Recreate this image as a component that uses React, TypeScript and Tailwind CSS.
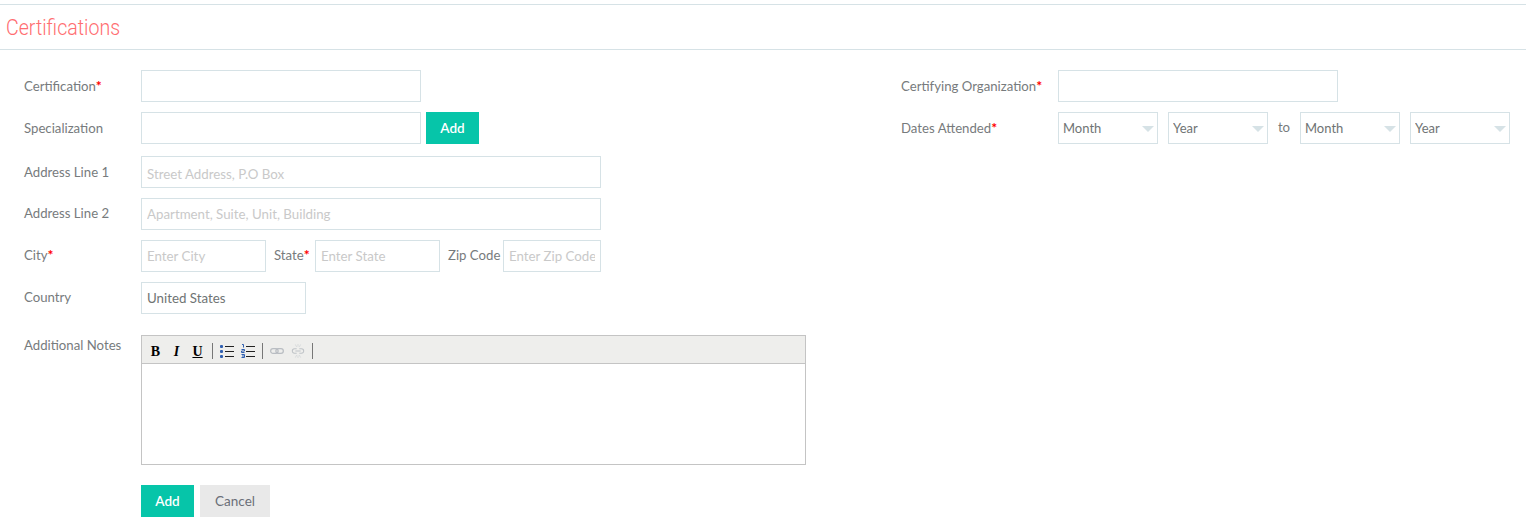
import type { ReactNode } from 'react'

const inputCls =
  "h-8 border border-[#d6e2e6] bg-white px-[5px] text-[13.3px] text-[#6f7474] placeholder:text-[#c9c9c9] outline-none"

function Req() {
  return <span className="text-[#f00] font-bold text-[14px]">*</span>
}

function Row({ label, req, className, labelClass, children }: { label: string; req?: boolean; className?: string; labelClass?: string; children: ReactNode }) {
  return (
    <div className={`flex items-start ${className || ''}`}>
      <label className={`w-[117px] shrink-0 text-[#777b7d] ${labelClass || 'h-8 leading-8'}`}>
        {label}
        {req && <Req />}
      </label>
      {children}
    </div>
  )
}

function MonthSelect({ text }: { text: string }) {
  return (
    <div className="relative w-[100px]">
      <select className="h-8 w-full appearance-none border border-[#d6e2e6] bg-white pl-[4px] text-[13px] leading-[28px] text-[#6f7474] outline-none" defaultValue={text}>
        <option>{text}</option>
      </select>
      <span className="absolute right-[4px] top-[14px] w-0 h-0 border-x-[6px] border-x-transparent border-t-[6px] border-t-[#d6e2e6]" />
    </div>
  )
}

function BulletIcon() {
  return (
    <svg width="14" height="14" viewBox="0 0 14 14">
      <rect x="0" y="1" width="3" height="3" rx="1" fill="#2f5fb0" />
      <rect x="0" y="6" width="3" height="3" rx="1" fill="#2f5fb0" />
      <rect x="0" y="11" width="3" height="3" rx="1" fill="#2f5fb0" />
      <path d="M5 2.5h9M5 7.5h9M5 12.5h9" stroke="#222" strokeWidth="1" />
    </svg>
  )
}

function NumberIcon() {
  return (
    <svg width="14" height="14" viewBox="0 0 14 14">
      <path d="M1 0.5h1.500v3M0.500 5.500h3v1.500h-3v1.500h3M0.500 10.500h3v3h-3M1 12h2.500" stroke="#2f5fb0" strokeWidth="1" fill="none" />
      <path d="M5 2.500h9M5 7.500h9M5 12.500h9" stroke="#222" strokeWidth="1" />
    </svg>
  )
}

function LinkIcon() {
  return (
    <svg width="14" height="14" viewBox="0 0 15 14">
      <rect x="0.700" y="4.500" width="8" height="5" rx="2.500" fill="none" stroke="#b9bdc2" strokeWidth="1.300" />
      <rect x="6.300" y="4.500" width="8" height="5" rx="2.500" fill="none" stroke="#b9bdc2" strokeWidth="1.300" />
    </svg>
  )
}

function UnlinkIcon() {
  return (
    <svg width="14" height="16" viewBox="0 0 16 16">
      <path d="M6.500 5.500H4a2.500 2.500 0 0 0 0 5h2.500M9.500 5.500H12a2.500 2.500 0 0 1 0 5H9.500M5 8h6" fill="none" stroke="#bfc3c7" strokeWidth="1.200" />
      <path d="M5 0.500l1.500 3M8 0v3M11 0.500l-1.500 3M5 15.500l1.500-3M8 16v-3M11 15.500l-1.500-3" stroke="#cfd2d5" strokeWidth="0.800" />
    </svg>
  )
}

function Sep() {
  return <span className="w-px h-4 bg-[#777]" />
}

export default function App() {
  return (
    <div className="w-[1526px] h-[526px] overflow-hidden bg-white pt-1 text-[13.2px] font-['Lato','Noto_Sans',sans-serif]">
      <div className="border-t border-b border-[#d6e2e6] h-[46px] pl-[6px] flex items-center">
        <h2 className="text-[#ff6d70] text-[22px] font-light font-['Roboto',sans-serif] origin-left scale-x-[0.89]">Certifications</h2>
      </div>

      <div className="flex pl-6 pt-5">
        {/* Left column */}
        <div className="w-[877px] shrink-0">
          <Row label="Certification" req>
            <input className={`${inputCls} w-[280px]`} />
          </Row>
          <Row label="Specialization" className="mt-[10px]">
            <input className={`${inputCls} w-[280px]`} />
            <button className="ml-[5px] w-[53px] h-8 bg-[#06c5a9] text-white font-semibold text-[13.5px]">Add</button>
          </Row>
          <Row label="Address Line 1" className="mt-3">
            <input className={`${inputCls} w-[460px] pt-[3px]`} placeholder="Street Address, P.O Box" />
          </Row>
          <Row label="Address Line 2" className="mt-[10px]" labelClass="h-8 leading-[30px]">
            <input className={`${inputCls} w-[460px]`} placeholder="Apartment, Suite, Unit, Building" />
          </Row>
          <Row label="City" req className="mt-[10px]" labelClass="h-8 leading-[30px]">
            <input className={`${inputCls} w-[125px]`} placeholder="Enter City" />
            <span className="ml-2 w-[41px] leading-[30px] text-[#777b7d]">
              State
              <Req />
            </span>
            <input className={`${inputCls} w-[125px]`} placeholder="Enter State" />
            <span className="ml-2 w-[55px] leading-[30px] text-[#777b7d] whitespace-nowrap">Zip Code</span>
            <input className={`${inputCls} w-[98px]`} placeholder="Enter Zip Code" />
          </Row>
          <Row label="Country" className="mt-[10px]" labelClass="h-8 leading-[30px]">
            <input className={`${inputCls} w-[165px]`} defaultValue="United States" />
          </Row>
          <Row label="Additional Notes" className="mt-[21px]" labelClass="leading-5">
            <div className="w-[665px] h-[130px] border border-[#c4c4c4] flex flex-col">
              <div className="h-[28px] pt-[3px] bg-[#eeeeec] border-b border-[#c4c4c4] flex items-center pl-[7px] gap-[6px]">
                <span className="w-[13px] text-center font-['Liberation_Serif',serif] font-bold text-[14px] text-black">B</span>
                <span className="ml-[2px] w-[13px] text-center font-['Liberation_Serif',serif] font-bold italic text-[14px] text-black">I</span>
                <span className="ml-[2px] w-[13px] text-center font-['Liberation_Serif',serif] font-bold underline text-[14px] text-black">U</span>
                <span className="ml-[2px] flex items-center gap-[7px]">
                  <Sep />
                  <BulletIcon />
                  <NumberIcon />
                  <Sep />
                  <LinkIcon />
                  <UnlinkIcon />
                  <Sep />
                </span>
              </div>
              <div className="flex-1 bg-white" />
            </div>
          </Row>
          <div className="mt-5 ml-[117px] flex gap-[6px]">
            <button className="w-[53px] h-8 bg-[#06c5a9] text-white font-semibold text-[13.5px]">Add</button>
            <button className="w-[70px] h-8 bg-[#e9e9e9] text-[#6b6f78] text-[13.5px]">Cancel</button>
          </div>
        </div>

        {/* Right column */}
        <div className="flex-1">
          <div className="flex items-start">
            <label className="w-[157px] h-8 leading-8 text-[#777b7d] whitespace-nowrap">
              Certifying Organization
              <Req />
            </label>
            <input className={`${inputCls} w-[280px]`} />
          </div>
          <div className="flex items-start mt-[10px]">
            <label className="w-[157px] h-8 leading-8 text-[#777b7d]">
              Dates Attended
              <Req />
            </label>
            <MonthSelect text="Month" />
            <div className="ml-[10px]">
              <MonthSelect text="Year" />
            </div>
            <span className="w-[32px] text-center leading-[30px] text-[#777b7d]">to</span>
            <MonthSelect text="Month" />
            <div className="ml-[10px]">
              <MonthSelect text="Year" />
            </div>
          </div>
        </div>
      </div>
    </div>
  )
}
